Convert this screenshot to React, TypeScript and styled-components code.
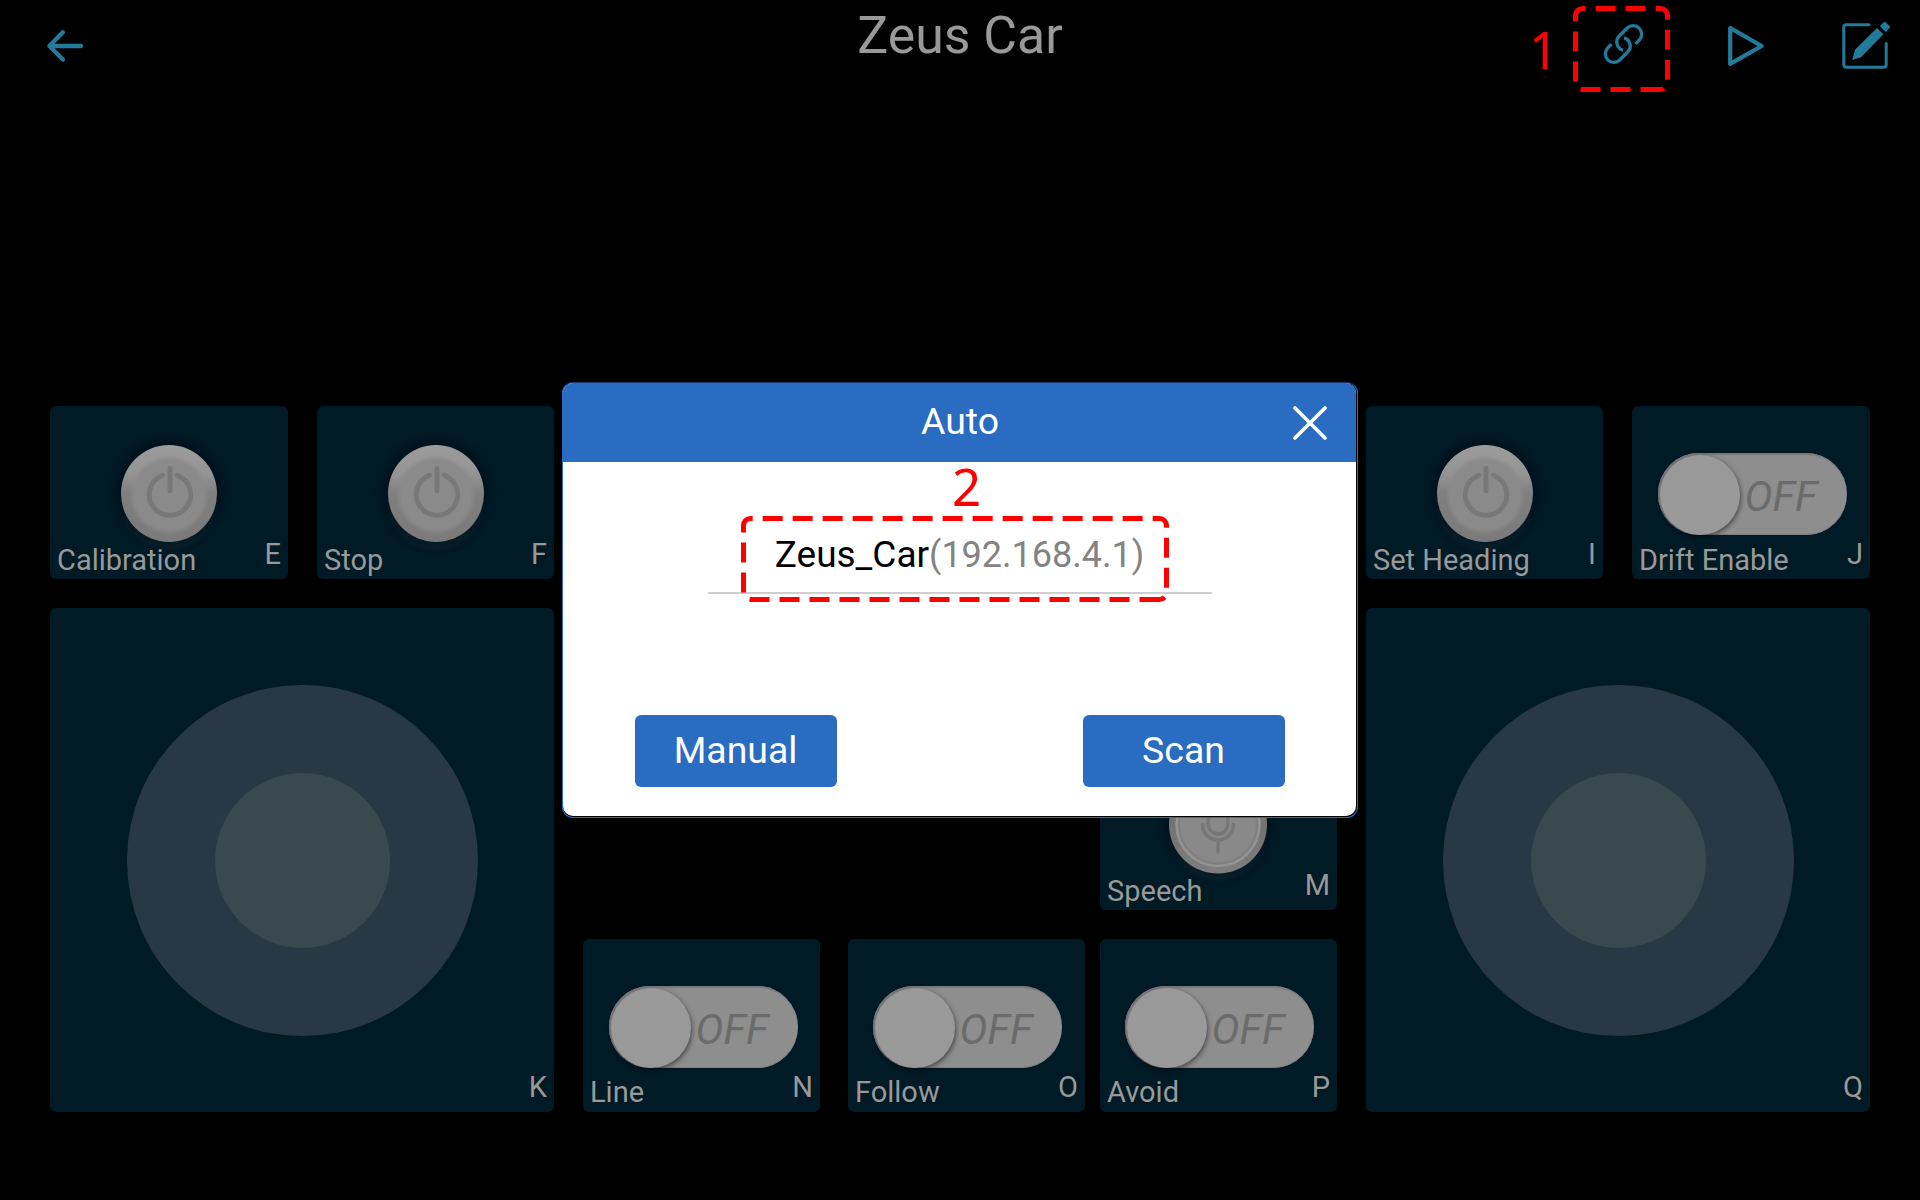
import React from "react";
import styled, { createGlobalStyle, css } from "styled-components";

const palette = {
  tile: "#001a26",
  blue: "#296cc1",
  teal: "#237b9c",
  dimText: "#999999",
  red: "#ff0000",
};

const GlobalStyle = createGlobalStyle`
  * { box-sizing: border-box; }
  body { margin: 0; background: #000; }
`;

const Screen = styled.div`
  position: relative;
  width: 1920px;
  height: 1200px;
  overflow: hidden;
  background: #000;
  color: ${palette.dimText};
  font-family: Roboto, "Liberation Sans", sans-serif;
  display: flex;
  flex-direction: column;
`;

/* ---------- top bar ---------- */

const TopBar = styled.header`
  height: 92px;
  padding: 0 28px 0 40px;
  display: grid;
  grid-template-columns: 1fr auto 1fr;
`;

const Title = styled.h1`
  margin: 0;
  height: 72px;
  font-size: 51.8px;
  line-height: 72px;
  font-weight: 400;
  padding-right: 12px;
`;

const Tools = styled.div<{ $end?: boolean }>`
  height: 92px;
  display: flex;
  align-items: center;
  gap: 68px;
  justify-content: ${(p) => (p.$end ? "flex-end" : "flex-start")};
`;

const IconButton = styled.button`
  width: 52px;
  height: 52px;
  padding: 0;
  border: 0;
  background: none;
  color: ${palette.teal};
  svg {
    display: block;
    overflow: visible;
  }
`;

/* ---------- board ---------- */

const Board = styled.main`
  margin-top: 314px;
  padding: 0 50px;
  height: 706px;
  display: flex;
  gap: 29px;
`;

const SidePanel = styled.section`
  width: 504px;
  display: flex;
  flex-direction: column;
  gap: 29px;
`;

const CenterPanel = styled.section`
  width: 754px;
  display: flex;
  flex-direction: column;
  justify-content: flex-end;
  align-items: flex-end;
  gap: 29px;
`;

const Row = styled.div<{ $fill?: boolean }>`
  display: flex;
  justify-content: space-between;
  ${(p) => p.$fill && css`width: 100%;`}
`;

const Tile = styled.div<{ $big?: boolean; $width?: number; $gapAfter?: number }>`
  width: ${(p) => (p.$big ? 504 : p.$width ?? 237)}px;
  height: ${(p) => (p.$big ? 504 : 173)}px;
  margin-right: ${(p) => p.$gapAfter ?? 0}px;
  border-radius: 6px;
  background: ${palette.tile};
  display: flex;
  flex-direction: column;
`;

const ControlArea = styled.div<{ $top: number; $nudge?: number }>`
  flex: 1;
  min-height: 0;
  padding-top: ${(p) => p.$top}px;
  padding-left: ${(p) => Math.max(p.$nudge ?? 0, 0)}px;
  padding-right: ${(p) => Math.max(-(p.$nudge ?? 0), 0)}px;
  display: flex;
  justify-content: center;
  align-items: flex-start;
`;

const TileFooter = styled.div`
  height: 42px;
  padding: 0 7px 0 7px;
  display: flex;
  justify-content: space-between;
  align-items: flex-end;
  font-size: 29px;
  line-height: 34px;
`;

const TileLabel = styled.span<{ $lift: number }>`
  padding-bottom: ${(p) => p.$lift}px;
`;

const TileKey = styled.span`
  margin-left: auto;
  padding-bottom: 8.5px;
`;

const RoundButton = styled.div`
  width: 96px;
  height: 97px;
  flex: none;
  border-radius: 50%;
  box-shadow: 0 -1px 7px 5px rgba(0, 14, 21, 0.6), 0 7px 5px 0 rgba(50, 80, 90, 0.25);
  svg {
    display: block;
    overflow: visible;
  }
`;

const SwitchTrack = styled.div`
  width: 189px;
  height: 82px;
  flex: none;
  border-radius: 42px;
  padding: 2px 2px 0;
  background: #8e8e8e;
  box-shadow: inset 1px 2px 1px #7c7879, inset 0 -1px 0 #7e7e7e;
  display: flex;
`;

const SwitchThumb = styled.div`
  width: 80px;
  height: 80px;
  flex: none;
  border-radius: 50%;
  background: #999;
  box-shadow: 1px 2px 5px rgba(0, 0, 0, 0.5);
`;

const SwitchText = styled.span`
  padding-left: 5px;
  font-size: 42px;
  line-height: 84px;
  font-style: italic;
  color: #6b6b6b;
`;

const Stick = styled.div`
  width: 351px;
  height: 351px;
  border-radius: 50%;
  background: #283945;
  display: flex;
  align-items: center;
  justify-content: center;
`;

const StickKnob = styled.div`
  width: 175px;
  height: 175px;
  border-radius: 50%;
  background: #3a4950;
`;

/* ---------- dialog ---------- */

const Overlay = styled.div`
  position: absolute;
  inset: 0;
  display: flex;
  align-items: center;
  justify-content: center;
`;

const DialogFrame = styled.div`
  width: 796px;
  height: 436px;
  padding: 0 1px 1px 0;
  border: 1px solid #2a6cc0;
  border-top-color: #17396a;
  border-radius: 11px;
  background: #000;
`;

const DialogBody = styled.div`
  height: 100%;
  border-radius: 10px;
  overflow: hidden;
  background: #fff;
  display: flex;
  flex-direction: column;
  align-items: center;
`;

const DialogHeader = styled.div`
  width: 100%;
  height: 78.5px;
  padding-right: 29px;
  background: ${palette.blue};
  color: #fff;
  display: grid;
  grid-template-columns: 1fr auto 1fr;
  align-items: start;
  font-size: 37.4px;
  line-height: 76px;
`;

const DialogTitle = styled.span`
  grid-column: 2;
  padding-left: 30px;
`;

const CloseButton = styled.button`
  justify-self: end;
  width: 34px;
  height: 34px;
  margin-top: 23px;
  padding: 0;
  border: 0;
  background: none;
  color: #fff;
  svg {
    display: block;
  }
`;

const DeviceRow = styled.div`
  width: 504px;
  height: 77px;
  margin-top: 55px;
  border-bottom: 2px solid #cfcfcf;
  font-size: 37px;
  line-height: 75px;
  text-align: center;
  color: #000;
`;

const Address = styled.span`
  font-size: 36px;
  color: #838383;
`;

const DialogActions = styled.div`
  width: 650px;
  margin-top: 121px;
  display: flex;
  justify-content: space-between;
`;

const ActionButton = styled.button`
  width: 202px;
  height: 72.5px;
  padding: 0 0 2px;
  border: 0;
  border-radius: 6px;
  background: ${palette.blue};
  color: #fff;
  font: 400 37.4px/68px Roboto, "Liberation Sans", sans-serif;
`;

/* ---------- callouts drawn over the interface ---------- */

const Callout = styled.svg<{ $x: number; $y: number }>`
  position: absolute;
  left: ${(p) => p.$x}px;
  top: ${(p) => p.$y}px;
  overflow: visible;
`;

const CalloutNumber = styled.span<{ $x: number; $y: number }>`
  position: absolute;
  left: ${(p) => p.$x}px;
  top: ${(p) => p.$y}px;
  color: ${palette.red};
  font-family: "Noto Sans", "Open Sans", sans-serif;
  font-size: 51px;
  line-height: 60px;
`;

function DashedBox({ x, y, w, h }: { x: number; y: number; w: number; h: number }) {
  const r = 7;
  const d = `M${w - r} ${h} H${r} A${r} ${r} 0 0 1 0 ${h - r} V${r} A${r} ${r} 0 0 1 ${r} 0 H${w - r} A${r} ${r} 0 0 1 ${w} ${r} V${h - r} A${r} ${r} 0 0 1 ${w - r} ${h}`;
  return (
    <Callout $x={x} $y={y} width={w + 1} height={h + 1}>
      <path
        d={d}
        transform="translate(0.5 0.5)"
        fill="none"
        stroke={palette.red}
        strokeWidth="5"
        strokeDasharray="20 10"
      />
    </Callout>
  );
}

/* ---------- drawings ---------- */

const stroke = { fill: "none", stroke: "currentColor" } as const;

const BackIcon = () => (
  <svg width="52" height="52" viewBox="40 20 52 52" {...stroke} strokeWidth="4.3" strokeLinecap="round" strokeLinejoin="round">
    <path d="M81 46H50M62.8 32.2L49.4 46L62.8 59.6" />
  </svg>
);

const LinkIcon = () => (
  <svg width="52" height="52" viewBox="0 0 52 52" {...stroke} strokeWidth="3.3">
    <path d="M23 30.2A8.5 8.5 0 0 1 19.3 16L27.5 7.8A8.5 8.5 0 0 1 39.5 19.8L35.6 24" />
    <path d="M24 17.8A8.5 8.5 0 0 1 27.7 32L19.5 40.2A8.5 8.5 0 0 1 7.5 28.2L11.4 24" />
  </svg>
);

const PlayIcon = () => (
  <svg width="52" height="52" viewBox="0 0 52 52" {...stroke} strokeWidth="4.2" strokeLinejoin="round">
    <path d="M10.2 8L41.7 26L10.2 43.9Z" />
  </svg>
);

const EditIcon = () => (
  <svg width="52" height="52" viewBox="1840 20 52 52" fill="none">
    <path
      d="M1869 24.7H1846.5Q1843.8 24.7 1843.8 27.4V64.5Q1843.8 67.2 1846.5 67.2H1883.5Q1886.2 67.2 1886.2 64.5V43.5"
      stroke="currentColor"
      strokeWidth="3"
      strokeLinecap="round"
    />
    <path d="M1877 28L1883.4 34.2L1861 57.2L1852.3 60L1855 49.8Z" fill="currentColor" />
    <path
      d="M1884.8 22.6L1889.2 27L1885.6 30.8L1881 26.2Z"
      fill="currentColor"
      stroke="currentColor"
      strokeWidth="1.8"
      strokeLinejoin="round"
    />
  </svg>
);

const CloseIcon = () => (
  <svg width="34" height="34" viewBox="0 0 34 34" {...stroke} strokeWidth="3.6" strokeLinecap="round">
    <path d="M2 2L32 32M32 2L2 32" />
  </svg>
);

const PowerFace = () => (
  <svg width="96" height="97" viewBox="0 0 96 97">
    <defs>
      <linearGradient id="rim" x1="0" y1="0" x2="0" y2="1">
        <stop offset="0" stopColor="#9c9c9c" />
        <stop offset="0.3" stopColor="#949494" />
        <stop offset="0.5" stopColor="#7f7f7f" />
        <stop offset="1" stopColor="#7a7a7a" />
      </linearGradient>
      <radialGradient id="dome">
        <stop offset="0.86" stopColor="#8a8a8a" />
        <stop offset="1" stopColor="#8a8a8a" stopOpacity="0" />
      </radialGradient>
    </defs>
    <ellipse cx="48" cy="48.5" rx="48" ry="48.5" fill="url(#rim)" />
    <circle cx="48" cy="50" r="40" fill="url(#dome)" />
    <g fill="none" stroke="#787878" strokeWidth="4.8" strokeLinecap="round">
      <path d="M41.6 30.2A20.7 20.7 0 1 0 56.4 30.2" />
      <path d="M49 23.5V46" />
    </g>
  </svg>
);

const MicFace = () => (
  <svg width="96" height="97" viewBox="0 0 96 97">
    <defs>
      <linearGradient id="micRim" x1="0" y1="0" x2="0" y2="1">
        <stop offset="0" stopColor="#8c8c8c" />
        <stop offset="0.5" stopColor="#727272" />
        <stop offset="1" stopColor="#7e7e7e" />
      </linearGradient>
    </defs>
    <circle cx="48" cy="48.5" r="49" fill="url(#micRim)" />
    <circle cx="48" cy="48.5" r="41.5" fill="#898989" stroke="#949494" strokeWidth="2.5" />
    <circle cx="48" cy="48.5" r="39" fill="none" stroke="#7f7f7f" strokeWidth="2" />
    <g fill="none" stroke="#777" strokeWidth="3.4" strokeLinecap="round">
      <path d="M38.2 32A9.8 9.8 0 0 1 57.8 32V48A9.8 9.8 0 0 1 38.2 48Z" />
      <path d="M32.5 48.5A15.5 15.5 0 0 0 63.5 48.5M48 64V76" />
    </g>
  </svg>
);

/* ---------- tiles ---------- */

type TileProps = {
  label?: string;
  keyName: string;
  width?: number;
  nudge?: number;
  gapAfter?: number;
  lift?: number;
};

const Footer = ({ label, keyName, lift = 2 }: TileProps) => (
  <TileFooter>
    {label && <TileLabel $lift={lift}>{label}</TileLabel>}
    <TileKey>{keyName}</TileKey>
  </TileFooter>
);

const ButtonTile = ({ mic, ...p }: TileProps & { mic?: boolean }) => (
  <Tile $width={p.width}>
    <ControlArea $top={mic ? 39 : 38.5} $nudge={p.nudge}>
      <RoundButton>{mic ? <MicFace /> : <PowerFace />}</RoundButton>
    </ControlArea>
    <Footer {...p} />
  </Tile>
);

const SwitchTile = (p: TileProps) => (
  <Tile $gapAfter={p.gapAfter} $width={p.width}>
    <ControlArea $top={47} $nudge={p.nudge ?? 2}>
      <SwitchTrack>
        <SwitchThumb />
        <SwitchText>OFF</SwitchText>
      </SwitchTrack>
    </ControlArea>
    <Footer {...p} />
  </Tile>
);

const StickTile = (p: TileProps) => (
  <Tile $big>
    <ControlArea $top={77}>
      <Stick>
        <StickKnob />
      </Stick>
    </ControlArea>
    <Footer {...p} />
  </Tile>
);

export default function App() {
  return (
    <>
      <GlobalStyle />
      <Screen>
        <TopBar>
          <Tools>
            <IconButton aria-label="Back"><BackIcon /></IconButton>
          </Tools>
          <Title>Zeus Car</Title>
          <Tools $end>
            <IconButton aria-label="Connect"><LinkIcon /></IconButton>
            <IconButton aria-label="Run"><PlayIcon /></IconButton>
            <IconButton aria-label="Edit"><EditIcon /></IconButton>
          </Tools>
        </TopBar>

        <Board>
          <SidePanel>
            <Row>
              <ButtonTile label="Calibration" keyName="E" width={238} />
              <ButtonTile label="Stop" keyName="F" nudge={1} />
            </Row>
            <StickTile keyName="K" />
          </SidePanel>
          <CenterPanel>
            <ButtonTile label="Speech" keyName="M" mic nudge={-1} />
            <Row $fill>
              <SwitchTile label="Line" keyName="N" lift={3} nudge={3} gapAfter={6.5} />
              <SwitchTile label="Follow" keyName="O" lift={3} nudge={1} gapAfter={-6.5} />
              <SwitchTile label="Avoid" keyName="P" lift={3} nudge={1} />
            </Row>
          </CenterPanel>
          <SidePanel>
            <Row>
              <ButtonTile label="Set Heading" keyName="I" />
              <SwitchTile label="Drift Enable" keyName="J" width={238} nudge={2} />
            </Row>
            <StickTile keyName="Q" />
          </SidePanel>
        </Board>

        <Overlay>
          <DialogFrame role="dialog">
            <DialogBody>
              <DialogHeader>
                <DialogTitle>Auto</DialogTitle>
                <CloseButton aria-label="Close"><CloseIcon /></CloseButton>
              </DialogHeader>
              <DeviceRow>
                Zeus_Car<Address>(192.168.4.1)</Address>
              </DeviceRow>
              <DialogActions>
                <ActionButton>Manual</ActionButton>
                <ActionButton>Scan</ActionButton>
              </DialogActions>
            </DialogBody>
          </DialogFrame>
        </Overlay>

        <CalloutNumber $x={1529} $y={19}>1</CalloutNumber>
        <DashedBox x={1575} y={8} w={92} h={81} />
        <CalloutNumber $x={952} $y={456}>2</CalloutNumber>
        <DashedBox x={743} y={518} w={423} h={81} />
      </Screen>
    </>
  );
}
